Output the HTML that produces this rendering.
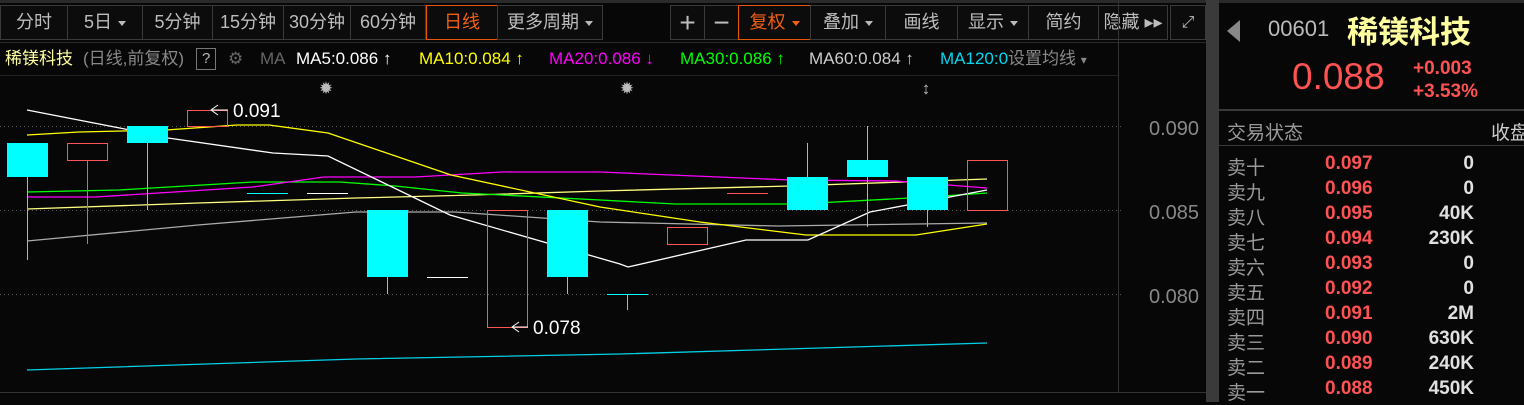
<!DOCTYPE html>
<html><head><meta charset="utf-8"><style>
*{margin:0;padding:0;box-sizing:border-box}
body{width:1524px;height:402px;background:#070707;overflow:hidden;position:relative;font-family:"Liberation Sans","Noto Sans CJK SC",sans-serif}
.a{position:absolute;white-space:nowrap}
.tb{position:absolute;top:5px;height:35px;border:1px solid #3a3a3a;background:#0c0c0c;color:#bdbdbd;font-size:18px;line-height:33px;text-align:center}
.tri{display:inline-block;width:0;height:0;border-left:4px solid transparent;border-right:4px solid transparent;border-top:5px solid #bbb;vertical-align:middle;margin-left:6px}
.lg{position:absolute;top:49px;font-size:17px;line-height:20px;white-space:nowrap}
.row{position:absolute;left:1227px;width:260px;height:25px;font-size:19px}
.row .l{position:absolute;left:0;color:#9a9a9a}
.row .p{position:absolute;left:98px;color:#ff5252;font-weight:bold}
.row .v{position:absolute;right:13px;color:#e0e0e0;font-weight:bold}
</style></head><body>
<div class="a" style="left:0;top:0;width:1217px;height:3px;background:#2a2a2a"></div>
<div class="tb" style="left:0;width:68px">分时</div>
<div class="tb" style="left:67px;width:76px">5日<span class="tri"></span></div>
<div class="tb" style="left:142px;width:71px">5分钟</div>
<div class="tb" style="left:212px;width:72px">15分钟</div>
<div class="tb" style="left:283px;width:68px">30分钟</div>
<div class="tb" style="left:350px;width:76px">60分钟</div>
<div class="tb" style="left:426px;width:72px;border-color:#e8560a;color:#f06010">日线</div>
<div class="tb" style="left:497px;width:106px">更多周期<span class="tri"></span></div>
<div class="tb" style="left:670px;width:35px;font-size:28px">+</div>
<div class="tb" style="left:704px;width:35px;font-size:28px">−</div>
<div class="tb" style="left:738px;width:73px;border-color:#e8560a;color:#f06010">复权<span class="tri" style="border-top-color:#f06010"></span></div>
<div class="tb" style="left:810px;width:76px">叠加<span class="tri"></span></div>
<div class="tb" style="left:885px;width:73px">画线</div>
<div class="tb" style="left:957px;width:72px">显示<span class="tri"></span></div>
<div class="tb" style="left:1028px;width:71px">简约</div>
<div class="tb" style="left:1098px;width:70px">隐藏 ▸▸</div>
<div class="tb" style="left:1170px;width:36px;font-size:16px">⤢</div>
<div class="a" style="left:0;top:42px;width:1206px;height:1px;background:#2a2a2a"></div>
<div class="lg" style="left:5px;color:#ffffa0">稀镁科技</div>
<div class="lg" style="left:83px;color:#888">(日线,前复权)</div>
<div class="lg" style="left:196px;top:48px;border:1px solid #777;color:#bbb;padding:0 5px;font-size:15px">?</div>
<div class="lg" style="left:228px;color:#666">⚙</div>
<div class="lg" style="left:260px;color:#666">MA</div>
<div class="lg" style="left:296px;color:#fff">MA5:0.086 ↑</div>
<div class="lg" style="left:419px;color:#ffff00">MA10:0.084 ↑</div>
<div class="lg" style="left:549px;color:#ff00ff">MA20:0.086 ↓</div>
<div class="lg" style="left:680px;color:#00ff00">MA30:0.086 ↑</div>
<div class="lg" style="left:809px;color:#ccc">MA60:0.084 ↑</div>
<div class="lg" style="left:940px;color:#00d8f0">MA120:0<span style="color:#888">设置均线 <span style="font-size:12px">▾</span></span></div>
<div class="a" style="left:0;top:75px;width:1118px;height:1px;background:#222"></div>
<svg class="a" style="left:0;top:0" width="1217" height="402">
<g stroke="#555" stroke-dasharray="1 3"><line x1="0" y1="126.5" x2="1122" y2="126.5"/><line x1="0" y1="210.5" x2="1122" y2="210.5"/><line x1="0" y1="294.5" x2="1122" y2="294.5"/></g>
<line x1="1118.5" y1="0" x2="1118.5" y2="392" stroke="#333"/>
<line x1="0" y1="392.5" x2="1206" y2="392.5" stroke="#333"/>
<rect x="1206" y="0" width="11" height="402" fill="#3a3a3a"/>
<g font-size="20" fill="#888" font-family="Liberation Sans"><text x="1149" y="135">0.090</text><text x="1149" y="219">0.085</text><text x="1149" y="303">0.080</text></g>
<g fill="#bbb" font-size="17" text-anchor="middle"><text x="326" y="94">✹</text><text x="627" y="94">✹</text><text x="926" y="94">↕</text></g>
<g stroke-width="1.3" fill="none">
<polyline stroke="#00d0e8" points="27,370 356,359 620,354 987,343"/>
<polyline stroke="#aaa" points="27,241 198,225 356,212 455,212 600,222 778,226 987,223"/>
<polyline stroke="#ffff80" points="27,209 198,203 356,198 474,195 600,191 790,186 987,179"/>
<polyline stroke="#00ff00" points="27,192 119,190 253,182 340,182 395,186 462,193 600,200 675,204 798,204 928,197 987,193"/>
<polyline stroke="#ff00ff" points="27,197 95,197 253,187 324,177 415,177 502,172 600,172 790,180 896,181 987,188"/>
<polyline stroke="#ffff00" points="27,135 79,132 166,130 237,125 269,125 328,133 451,175 600,207 700,222 806,235 916,235 987,224"/>
<polyline stroke="#fff" points="27,110 130,130 168,138 273,153 328,156 450,215 620,264 628,267 746,240 808,240 870,212 987,190"/>
</g>
<g fill="#00ffff" stroke="#00ffff">
<line x1="27.5" y1="177" x2="27.5" y2="260"/><rect x="7" y="143" width="41" height="34" stroke="none"/>
<line x1="147.5" y1="143" x2="147.5" y2="210"/><rect x="127" y="126" width="41" height="17" stroke="none"/>
<line x1="247" y1="193.5" x2="288" y2="193.5"/>
<line x1="387.5" y1="277" x2="387.5" y2="294"/><rect x="367" y="210" width="41" height="67" stroke="none"/>
<line x1="567.5" y1="277" x2="567.5" y2="294"/><rect x="547" y="210" width="41" height="67" stroke="none"/>
<line x1="607" y1="294.5" x2="648" y2="294.5"/><line x1="627.5" y1="294" x2="627.5" y2="310"/>
<line x1="807.5" y1="143" x2="807.5" y2="177"/><rect x="787" y="177" width="41" height="33" stroke="none"/>
<line x1="867.5" y1="126" x2="867.5" y2="227"/><rect x="847" y="160" width="41" height="17" stroke="none"/>
<line x1="927.5" y1="210" x2="927.5" y2="227"/><rect x="907" y="177" width="41" height="33" stroke="none"/>
</g>
<g stroke="#ff5555" fill="none">
<rect x="67.5" y="143.5" width="40" height="17"/><line x1="87.5" y1="161" x2="87.5" y2="244"/>
<rect x="187.5" y="110.5" width="40" height="16"/>
<line x1="307" y1="193.5" x2="348" y2="193.5" stroke="#fff"/>
<line x1="427" y1="277.5" x2="468" y2="277.5" stroke="#fff"/>
<rect x="487.5" y="210.5" width="40" height="117"/>
<rect x="667.5" y="227.5" width="40" height="17"/>
<line x1="727" y1="193.5" x2="768" y2="193.5"/>
<rect x="967.5" y="160.5" width="40" height="50"/>
</g>
<g stroke="#fff" fill="none"><polyline points="218,105 211,110 218,115"/><line x1="211" y1="110" x2="228" y2="110"/>
<polyline points="519,322 512,327 519,332"/><line x1="512" y1="327" x2="528" y2="327"/></g>
<g fill="#fff" font-size="19"><text x="233" y="117">0.091</text><text x="533" y="334">0.078</text></g>
</svg>
<div class="a" style="left:1217px;top:0;width:2px;height:402px;background:#3a3a3a"></div>
<div class="a" style="left:1219px;top:0;width:305px;height:3px;background:#2a2a2a"></div>
<div class="a" style="left:1227px;top:20px;width:0;height:0;border-top:11px solid transparent;border-bottom:11px solid transparent;border-right:13px solid #888"></div>
<div class="a" style="left:1268px;top:16px;font-size:22px;color:#bbb">00601</div>
<div class="a" style="left:1347px;top:10px;font-size:31px;color:#ffffa0;font-weight:bold;font-family:'Noto Sans CJK SC',sans-serif;line-height:40px">稀镁科技</div>
<div class="a" style="left:1292px;top:56px;font-size:37px;color:#ff5252">0.088</div>
<div class="a" style="left:1413px;top:57px;font-size:19px;color:#ff5252;font-weight:bold;line-height:23px">+0.003<br>+3.53%</div>
<div class="a" style="left:1219px;top:109px;width:305px;height:2px;background:#3a3a3a"></div>
<div class="a" style="left:1227px;top:118px;font-size:19px;color:#999">交易状态</div>
<div class="a" style="left:1491px;top:118px;font-size:19px;color:#ccc">收盘</div>
<div class="a" style="left:1219px;top:145px;width:305px;height:1px;background:#3a3a3a"></div>
<div class="row" style="top:153px"><span class="l">卖十</span><span class="p">0.097</span><span class="v">0</span></div>
<div class="row" style="top:178px"><span class="l">卖九</span><span class="p">0.096</span><span class="v">0</span></div>
<div class="row" style="top:203px"><span class="l">卖八</span><span class="p">0.095</span><span class="v">40K</span></div>
<div class="row" style="top:228px"><span class="l">卖七</span><span class="p">0.094</span><span class="v">230K</span></div>
<div class="row" style="top:253px"><span class="l">卖六</span><span class="p">0.093</span><span class="v">0</span></div>
<div class="row" style="top:278px"><span class="l">卖五</span><span class="p">0.092</span><span class="v">0</span></div>
<div class="row" style="top:303px"><span class="l">卖四</span><span class="p">0.091</span><span class="v">2M</span></div>
<div class="row" style="top:328px"><span class="l">卖三</span><span class="p">0.090</span><span class="v">630K</span></div>
<div class="row" style="top:353px"><span class="l">卖二</span><span class="p">0.089</span><span class="v">240K</span></div>
<div class="row" style="top:378px"><span class="l">卖一</span><span class="p">0.088</span><span class="v">450K</span></div>
</body></html>
